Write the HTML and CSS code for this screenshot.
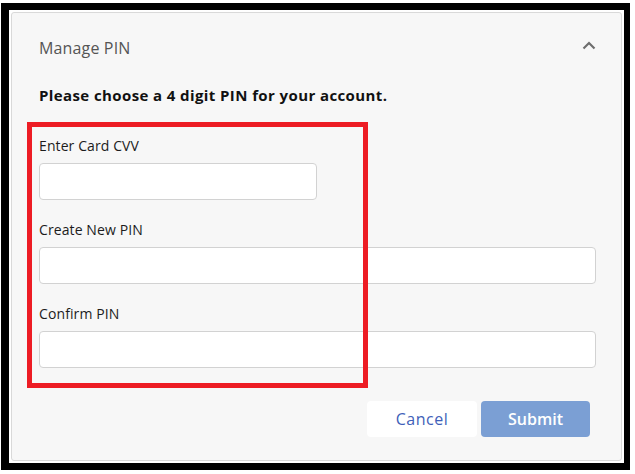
FILE: index.html
```html
<!DOCTYPE html>
<html lang="en">
<head>
<meta charset="utf-8">
<title>Manage PIN</title>
<link rel="stylesheet" href="styles.css">
</head>
<body>
<div class="frame">
  <section class="card">
    <header class="card-header">
      <h2 class="card-title">Manage PIN</h2>
      <svg class="chevron" width="14" height="9" viewBox="0 0 14 9" aria-hidden="true">
        <polyline points="1.5,7.5 7,2 12.5,7.5" fill="none" stroke="#6e6e6e" stroke-width="2.2"/>
      </svg>
    </header>
    <p class="intro">Please choose a 4 digit PIN for your account.</p>
    <form class="pin-form">
      <div class="field">
        <label class="field-label" for="cvv">Enter Card CVV</label>
        <input class="field-input field-input--short" id="cvv" type="text">
      </div>
      <div class="field">
        <label class="field-label" for="newpin">Create New PIN</label>
        <input class="field-input" id="newpin" type="text">
      </div>
      <div class="field">
        <label class="field-label" for="confirmpin">Confirm PIN</label>
        <input class="field-input" id="confirmpin" type="text">
      </div>
      <div class="actions">
        <button type="button" class="btn btn-cancel">Cancel</button>
        <button type="button" class="btn btn-submit">Submit</button>
      </div>
    </form>
  </section>
</div>
<div class="highlight"></div>
</body>
</html>
```
FILE: styles.css
```css
html, body {
  margin: 0;
  padding: 0;
  background: #ffffff;
}
body {
  font-family: "Open Sans", "Noto Sans", sans-serif;
  position: relative;
  width: 635px;
  height: 474px;
  overflow: hidden;
}
.frame {
  box-sizing: border-box;
  margin: 3px 0 0 1px;
  width: 629px;
  height: 467px;
  border-style: solid;
  border-color: #000;
  border-width: 7px 6px 7px 8px;
  padding: 2px;
  background: #fff;
}
.card {
  box-sizing: border-box;
  height: 449px;
  background: #f7f7f7;
  border: 1px solid #d9d9d9;
  border-radius: 3px;
  padding: 0 25px 23px 27px;
}
.card-header {
  height: 70px;
  display: flex;
  align-items: center;
  justify-content: space-between;
}
.card-title {
  margin: 0;
  font-size: 16px;
  font-weight: 400;
  letter-spacing: 0.15px;
  color: #555;
}
.chevron {
  margin-top: -6px;
}
.intro {
  margin: 0;
  height: 24px;
  line-height: 24px;
  font-size: 15px;
  font-weight: 700;
  letter-spacing: 0.4px;
  color: #111;
}
.pin-form {
  margin-top: 30px;
  display: flex;
  flex-direction: column;
  gap: 21px;
}
.field {
  display: flex;
  flex-direction: column;
  gap: 8px;
}
.field-label {
  height: 18px;
  line-height: 18px;
  font-size: 14px;
  font-weight: 500;
  letter-spacing: 0.1px;
  color: #1c1c1c;
}
.field-input {
  box-sizing: border-box;
  height: 37px;
  width: 100%;
  margin: 0;
  background: #fff;
  border: 1px solid #d2d2d2;
  border-radius: 4px;
  outline: none;
}
.field-input--short {
  width: 278px;
}
.actions {
  margin-top: 12px;
  margin-right: 6px;
  display: flex;
  justify-content: flex-end;
  gap: 4px;
}
.btn {
  height: 36px;
  border: none;
  border-radius: 4px;
  font-family: inherit;
  font-size: 16px;
  padding: 0;
}
.btn-cancel {
  width: 110px;
  background: #fff;
  color: #3f5fb9;
  letter-spacing: 0.5px;
}
.btn-submit {
  width: 109px;
  background: #7b9fd4;
  color: #fff;
  font-weight: 600;
}
.highlight {
  position: absolute;
  left: 27px;
  top: 122px;
  width: 341px;
  height: 266px;
  box-sizing: border-box;
  border: 5px solid #ed1c24;
  pointer-events: none;
}
```
